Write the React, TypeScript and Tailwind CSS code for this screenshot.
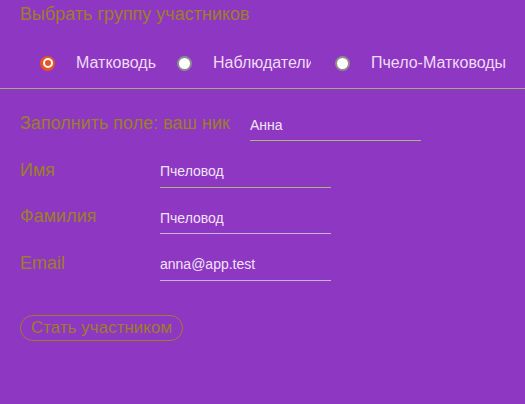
import { useState } from "react";

const GOLD = "text-[#9c7f2a]";

type Field = { id: string; label: string; value: string; line: string };

const fields: Field[] = [
  { id: "nick", label: "Заполнить поле: ваш ник", value: "Анна", line: "border-[#a9b87a]" },
  { id: "name", label: "Имя", value: "Пчеловод", line: "border-[#a9b87a]" },
  { id: "surname", label: "Фамилия", value: "Пчеловод", line: "border-[#c9b3dc]" },
  { id: "email", label: "Email", value: "anna@app.test", line: "border-[#c9b3dc]" },
];

const groups = [
  { id: "queen", label: "Матководь", labelClass: "w-[101px]" },
  { id: "watch", label: "Наблюдатели", labelClass: "w-[122px]" },
  { id: "bee", label: "Пчело-Матководы", labelClass: "" },
];

function Radio({ checked, onClick }: { checked: boolean; onClick: () => void }) {
  if (checked) {
    return (
      <button
        type="button"
        onClick={onClick}
        aria-pressed
        className="flex h-[15px] w-[15px] shrink-0 items-center justify-center rounded-full bg-[#e95420]"
      >
        <span className="h-[10px] w-[10px] rounded-full border-[2.5px] border-white bg-[#e95420]" />
      </button>
    );
  }
  return (
    <button
      type="button"
      onClick={onClick}
      aria-pressed={false}
      className="h-[15px] w-[15px] shrink-0 rounded-full border-2 border-[#8d8d8d] bg-white"
    />
  );
}

export default function App() {
  const [group, setGroup] = useState("queen");
  const [values, setValues] = useState<Record<string, string>>(
    Object.fromEntries(fields.map((f) => [f.id, f.value]))
  );

  return (
    <div className="min-h-[404px] w-full bg-[#8e37c2] font-['Liberation_Sans',Arial,sans-serif]">
      <h2 className={`pl-5 text-[18px] leading-[28px] ${GOLD}`}>Выбрать группу участников</h2>

      {/* group choice */}
      <div className="mt-[23px] flex items-center border-b border-[#a5ad72] pb-[13px] pl-10">
        {groups.map((g) => (
          <div key={g.id} className="flex h-6 items-center">
            <Radio checked={group === g.id} onClick={() => setGroup(g.id)} />
            <span className={`ml-[21px] whitespace-nowrap text-[16px] text-[#eedcf6] ${g.labelClass}`}>
              <span className={g.id === "watch" ? "block w-[98px] overflow-hidden" : ""}>{g.label}</span>
            </span>
          </div>
        ))}
      </div>

      {/* fields */}
      <div className="flex flex-col gap-[14.5px] pl-5 pt-5">
        {fields.map((f) => (
          <div key={f.id} className="flex items-center">
            <label htmlFor={f.id} className={`mr-5 min-w-[120px] pb-[3px] text-[18px] ${GOLD}`}>
              {f.label}
            </label>
            <input
              id={f.id}
              value={values[f.id]}
              onChange={(e) => setValues({ ...values, [f.id]: e.target.value })}
              className={`h-[32px] w-[171px] border-b bg-transparent text-[14px] text-[#f1e4f8] outline-none ${f.line}`}
            />
          </div>
        ))}
      </div>

      <button
        type="button"
        className={`ml-5 mt-[34px] h-[26px] rounded-full border border-[#9c7f2a] px-[10px] text-[17px] leading-none ${GOLD}`}
      >
        Стать участником
      </button>
    </div>
  );
}
